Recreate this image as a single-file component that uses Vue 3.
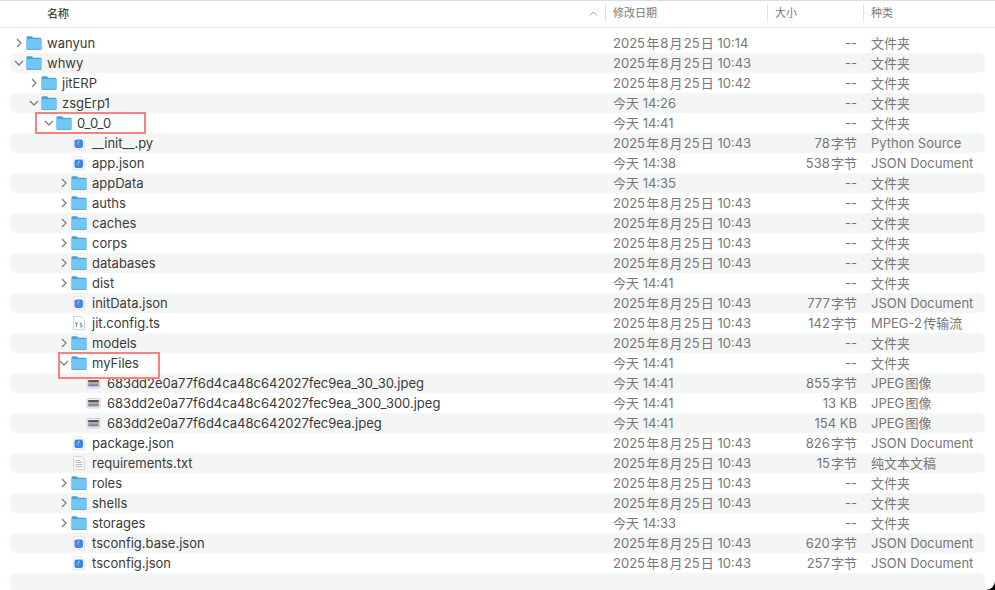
<script setup>
const D = '2025\u200A年\u200A8\u200A月\u200A25\u200A日 10:43'
const J = 'JSON Document'
const F = '文件夹'
const B = '\u200A字节'
const rows = [
  { n: 'wanyun', l: 0, t: 'c', d: '2025\u200A年\u200A8\u200A月\u200A25\u200A日 10:14', s: '--', k: F },
  { n: 'whwy', l: 0, t: 'o', d: D, s: '--', k: F },
  { n: 'jitERP', l: 1, t: 'c', d: '2025\u200A年\u200A8\u200A月\u200A25\u200A日 10:42', s: '--', k: F },
  { n: 'zsgErp1', l: 1, t: 'o', d: '今天 14:26', s: '--', k: F },
  { n: '0_0_0', l: 2, t: 'o', d: '今天 14:41', s: '--', k: F },
  { n: '__init__.py', l: 3, t: 'j', d: D, s: '78' + B, k: 'Python Source' },
  { n: 'app.json', l: 3, t: 'j', d: '今天 14:38', s: '538' + B, k: J },
  { n: 'appData', l: 3, t: 'c', d: '今天 14:35', s: '--', k: F },
  { n: 'auths', l: 3, t: 'c', d: D, s: '--', k: F },
  { n: 'caches', l: 3, t: 'c', d: D, s: '--', k: F },
  { n: 'corps', l: 3, t: 'c', d: D, s: '--', k: F },
  { n: 'databases', l: 3, t: 'c', d: D, s: '--', k: F },
  { n: 'dist', l: 3, t: 'c', d: '今天 14:41', s: '--', k: F },
  { n: 'initData.json', l: 3, t: 'j', d: D, s: '777' + B, k: J },
  { n: 'jit.config.ts', l: 3, t: 'ts', d: D, s: '142' + B, k: 'MPEG-2\u200A传输流' },
  { n: 'models', l: 3, t: 'c', d: D, s: '--', k: F },
  { n: 'myFiles', l: 3, t: 'o', d: '今天 14:41', s: '--', k: F },
  { n: '683dd2e0a77f6d4ca48c642027fec9ea_30_30.jpeg', l: 4, t: 'i', d: '今天 14:41', s: '855' + B, k: 'JPEG\u200A图像' },
  { n: '683dd2e0a77f6d4ca48c642027fec9ea_300_300.jpeg', l: 4, t: 'i', d: '今天 14:41', s: '13 KB', k: 'JPEG\u200A图像' },
  { n: '683dd2e0a77f6d4ca48c642027fec9ea.jpeg', l: 4, t: 'i', d: '今天 14:41', s: '154 KB', k: 'JPEG\u200A图像' },
  { n: 'package.json', l: 3, t: 'j', d: D, s: '826' + B, k: J },
  { n: 'requirements.txt', l: 3, t: 'x', d: D, s: '15' + B, k: '纯文本文稿' },
  { n: 'roles', l: 3, t: 'c', d: D, s: '--', k: F },
  { n: 'shells', l: 3, t: 'c', d: D, s: '--', k: F },
  { n: 'storages', l: 3, t: 'c', d: '今天 14:33', s: '--', k: F },
  { n: 'tsconfig.base.json', l: 3, t: 'j', d: D, s: '620' + B, k: J },
  { n: 'tsconfig.json', l: 3, t: 'j', d: D, s: '257' + B, k: J },
]
const isFolder = (t) => t === 'c' || t === 'o'
</script>

<template>
  <div class="finder">
    <header class="head">
      <div class="hname">名称</div>
      <svg class="caret" width="9" height="5" viewBox="0 0 9 5"><path d="M1 4.500 4.500 1 8 4.500" fill="none" stroke="#9a9a9a" stroke-width="1"/></svg>
      <div class="hcol hdate">修改日期</div>
      <div class="hcol hsize">大小</div>
      <div class="hcol hkind">种类</div>
    </header>
    <main class="list">
      <div v-for="r in rows" :key="r.n" class="row">
        <div class="name" :style="{ paddingLeft: r.l * 15 + 'px' }">
          <svg v-if="r.t === 'c'" class="chev" width="8" height="12" viewBox="0 0 8 12"><path d="M2 2 6 6 2 10" fill="none" stroke="#808080" stroke-width="1.300"/></svg>
          <svg v-else-if="r.t === 'o'" class="chev" width="8" height="12" viewBox="0 0 8 12"><path d="M0 4 4 8 8 4" fill="none" stroke="#808080" stroke-width="1.300"/></svg>
          <span v-else class="chev"></span>

          <svg v-if="isFolder(r.t)" class="ico" width="16" height="14" viewBox="0 0 16 14">
            <path d="M1.500.3h4.300l1.500 1.500h7.200a1 1 0 0 1 1 1v9.900a1 1 0 0 1-1 1H1.500a1 1 0 0 1-1-1V1.300a1 1 0 0 1 1-1z" fill="#4f9fd6"/>
            <path d="M.5 3.700a.7.7 0 0 1 .7-.7h13.600a.7.7 0 0 1 .7.7v9a1 1 0 0 1-1 1H1.500a1 1 0 0 1-1-1z" fill="#70c6f5"/>
            <path d="M1.200 13.400h13.600" stroke="#5a9cc8" stroke-width=".6"/>
          </svg>
          <svg v-else-if="r.t === 'j'" class="ico" width="16" height="14" viewBox="0 0 16 14">
            <path d="M2.500.3h8L13.500 3.300v10.400h-11z" fill="#f8f8f8" stroke="#dcdcdc" stroke-width=".7"/>
            <rect x="3.500" y="3.500" width="8.500" height="8.500" rx="2" fill="#3d86ee"/>
            <path d="M8.700 5.300c-1.300-.3-1.400.8-1.400 1.200 0 .8-.7.800-.7 1.200 0 .4.700.3.700 1" fill="none" stroke="#d5e5fb" stroke-width=".9"/>
          </svg>
          <svg v-else-if="r.t === 'ts'" class="ico" width="16" height="14" viewBox="0 0 16 14">
            <path d="M2.500.5h8L13.500 3.500v10h-11z" fill="#fff" stroke="#c4ccd4" stroke-width=".8"/>
            <path d="M4 7h3M5.500 7v4M11 7.300H9.300v1.600H11v2H9" fill="none" stroke="#5a8fb0" stroke-width=".9"/>
          </svg>
          <svg v-else-if="r.t === 'i'" class="ico" width="16" height="14" viewBox="0 0 16 14">
            <rect x="1" y="2.500" width="13" height="9.500" rx=".8" fill="#f5f5f5" stroke="#b5b5b5" stroke-width=".6"/>
            <rect x="2.200" y="4" width="10.600" height="2.400" fill="#5a5560"/>
            <rect x="2.200" y="6.400" width="10.600" height="1.200" fill="#b09a70"/>
            <rect x="2.200" y="7.600" width="10.600" height="2.900" fill="#9088b4"/>
          </svg>
          <svg v-else class="ico" width="16" height="14" viewBox="0 0 16 14">
            <path d="M2.500.5h8L13.500 3.500v10h-11z" fill="#f7f7f7" stroke="#d2d2d2" stroke-width=".8"/>
            <path d="M4.500 4.500h5M4.500 6.500h7M4.500 8.500h7M4.500 10.500h7" stroke="#a8a8a8" stroke-width=".7"/>
          </svg>

          <span class="label">{{ r.n }}</span>
        </div>
        <div class="date">{{ r.d }}</div>
        <div class="size">{{ r.s }}</div>
        <div class="kind">{{ r.k }}</div>
      </div>
      <div class="row"></div>
    </main>
    <div class="mark mark-a"></div>
    <div class="mark mark-b"></div>
  </div>
</template>

<style>
html, body { background: #000; margin: 0; }
</style>

<style scoped>
.finder {
  position: relative;
  width: 995px;
  height: 590px;
  overflow: hidden;
  background: #fff;
  border-bottom-right-radius: 9px;
  font-family: Inter, "Noto Sans CJK SC", sans-serif;
  font-size: 13px;
  color: #777;
}
.head {
  box-sizing: border-box;
  height: 28px;
  display: flex;
  align-items: center;
  padding-bottom: 2px;
  border-top: 1px solid #dedede;
  border-bottom: 1px solid #e3e3e3;
  font-size: 11px;
  font-weight: 500;
}
.hname { width: 590px; padding-left: 47px; box-sizing: border-box; color: #444; }
.caret { margin-left: 1px; margin-right: 1px; width: 9px; position: relative; left: -2px; }
.hcol { height: 18px; line-height: 18px; border-left: 1px solid #e2e2e2; padding-left: 7px; box-sizing: border-box; color: #777; font-weight: 400; }
.hdate { margin-left: 4px; width: 162px; }
.hsize { width: 96px; }
.hkind { flex: 1; }
.list { padding: 5px 10px 0; }
.row {
  height: 20px;
  display: flex;
  align-items: center;
  line-height: 20px;
  white-space: nowrap;
}
.row:nth-child(even) { background: #f4f5f5; border-radius: 6px; }
.name { width: 603px; display: flex; align-items: center; box-sizing: border-box; color: #3a3a3a; }
.chev { width: 8px; height: 12px; margin-left: 5px; flex: none; overflow: visible; }
.ico { margin-left: 3px; flex: none; }
.label { margin-left: 5px; }
.date { width: 190px; }
.size { width: 54px; text-align: right; }
.kind { margin-left: 14px; }
.mark { position: absolute; border: 2px solid #f6817d; box-sizing: border-box; }
.mark-a { left: 35px; top: 112px; width: 111px; height: 22px; }
.mark-b { left: 58px; top: 352px; width: 102px; height: 27px; }
</style>
